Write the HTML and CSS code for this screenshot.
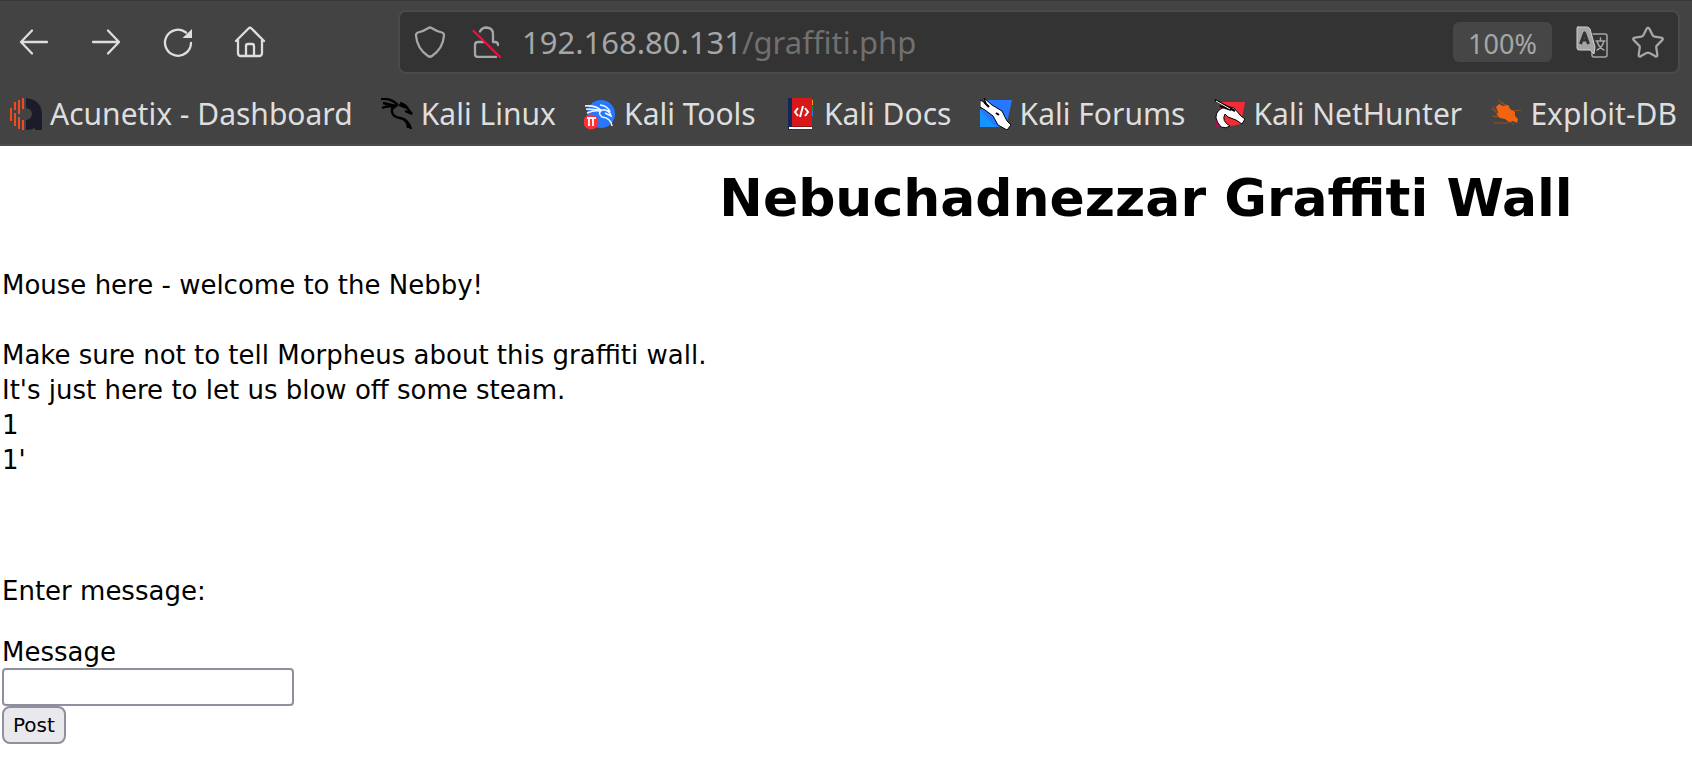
FILE: index.html
```html
<!DOCTYPE html>
<html lang="en">
<head>
<meta charset="utf-8">
<title>Nebuchadnezzar Graffiti Wall</title>
<link rel="stylesheet" href="styles.css">
</head>
<body>
<header class="browser">
  <div class="toolbar">
    <nav class="nav" aria-label="Browser navigation">
      <button class="icon-button" type="button" aria-label="Back"><svg class="icon" viewBox="0 0 32 32"><path d="M29 16H3M14 4.500 3 16l11 11.500"/></svg></button>
      <button class="icon-button" type="button" aria-label="Forward"><svg class="icon" viewBox="0 0 32 32"><path d="M3 16h26M18 4.500 29 16 18 27.500"/></svg></button>
      <button class="icon-button" type="button" aria-label="Reload"><svg class="icon" viewBox="0 0 32 32"><path d="M29 17A13 13 0 1 1 24 6.500"/><path class="solid" d="M30 3v9h-9.500z"/></svg></button>
      <button class="icon-button" type="button" aria-label="Home"><svg class="icon" viewBox="0 0 32 32"><path d="M2 15 14.500 2.500q1.500-1.500 3 0L30 15M4 14v13q0 3 3 3h18q3 0 3-3V14M12 30V20q0-2 2-2h4q2 0 2 2v10"/></svg></button>
    </nav>
    <div class="address">
      <div class="tools">
        <svg class="icon" viewBox="0 0 32 32" role="img" aria-label="Protection"><path d="M14.500 2q1.500-1 3 0Q22 5 28 6.500q2 .5 2 3-1 13-12 20.500-2 1.500-4 0Q3 22.500 2 9.500q0-2.500 2-3Q10 5 14.500 2z"/></svg>
        <svg class="icon" viewBox="0 0 32 32" role="img" aria-label="Not secure"><path d="M10 5.500Q12 1.500 16.500 1.500 23 2 23 8v8h2q3 0 3 3M14 16H8q-3 0-3 3v9q0 3 3 3h18"/><path class="slash" d="M3.500 5 30 31"/></svg>
      </div>
      <span class="url">192.168.80.131<span class="path">/graffiti.php</span></span>
      <div class="tools">
        <button class="zoom" type="button">100%</button>
        <svg class="icon" viewBox="0 0 32 32" role="img" aria-label="Translate"><path class="thin" d="M17 8h12q2 0 2 2v19q0 2-2 2H18q-2 0-2-2v-5M20 15h9M24.500 12v3M21 15q2 7 7 9M28 15q-2 7-7 9"/><path class="page" d="M2 1h9q2 0 3 2l5 18-1 7-4-4H3q-2 0-2-2V2q0-1 1-1z"/><path class="letter" d="m4.500 18 4-11 4 11M6 14h5"/></svg>
        <svg class="icon" viewBox="0 0 32 32" role="img" aria-label="Bookmark"><path d="m14.500 3q1.500-2.500 3 0l3 6q.7 1.500 2 1.700l6.500 1q3 .5 1 2.700l-5 5q-1 1-.7 2.500l1 6.500q.3 3-2.300 1.700L17.500 27q-1.500-.7-3 0L9 30.100q-2.600 1.300-2.300-1.700l1-6.500q.3-1.500-.7-2.500l-5-5q-2-2.200 1-2.700l6.500-1q1.300-.2 2-1.700z"/></svg>
      </div>
    </div>
  </div>
  <nav class="bookmarks" aria-label="Bookmarks">
    <a class="bookmark" href="#"><svg class="fav" viewBox="0 0 32 32"><path fill="#1b1b29" d="M16 0q16 2 16 17v15h-7v-2q-4 2-9 2V22a6 6 0 0 0 0-12z"/><path fill="none" stroke="#f04a20" stroke-width="2" d="M1 10v13M5 4v8M5 15v13M9 2v14M9 19v12M13 0v11M13 22v10"/></svg>Acunetix - Dashboard</a>
    <a class="bookmark" href="#"><svg class="fav" viewBox="0 0 32 32"><path class="ink" d="M0 1q10-1 17 6M2 5l13 3M1 10q6-3 14-1M17 7q-7 2-6 7 1 5 8 6 8 1 11 11M18 7l8 3 5 6-7-3M19 5q6 2 8 6M22 21q5 3 5 9"/></svg>Kali Linux</a>
    <a class="bookmark" href="#"><svg class="fav" viewBox="0 0 32 32"><circle cx="17" cy="16" r="14" fill="#2777ff"/><path d="M1 8q10-1 16 4M2 11l14 1M3 15q7-3 13-2M18 12q-5 3 0 7 9 1 10 9M18 12q7-1 9 6l-6-3M16 7q8 1 10 7" fill="none" stroke="#eef6ff" stroke-width="1.600"/><circle cx="7" cy="24" r="7.500" fill="#ff3037"/><path d="M3 20h9M5 20v8M9 20v8" stroke="#fff" stroke-width="1.800"/></svg>Kali Tools</a>
    <a class="bookmark" href="#"><svg class="fav" viewBox="-4 0 32 32"><path fill="#ff9b20" d="M22 2h3v5h-3z"/><path fill="#168b55" d="M22 8h3v5h-3z"/><path fill="#2777ff" d="M22 13h3v5h-3z"/><path fill="#d81718" d="M4 0h20v29H4z"/><path fill="#10285c" d="M0 0h4v32H0z"/><path fill="#8d1117" d="M4 28h20v4H4z"/><path fill="#fff" d="M1 29h23v2H1z"/><path d="m10 10-3 4 3 4M17 10l3 4-3 4M15 8l-3 11" fill="none" stroke="#fff" stroke-width="2"/></svg>Kali Docs</a>
    <a class="bookmark" href="#"><svg class="fav" viewBox="0 0 32 32"><path fill="#2777ff" d="M8 2h24l-6 27H0V12z"/><path fill="#1593ff" d="M0 12 16 29H0z"/><path d="M0 2 6 5 4 0l8 7 10 6 5 10 4 4-4 5-9-5-5-9-8-6-5-3z" fill="#fff" stroke="#000"/><path d="m4 4 5 5M16 15l3 2" stroke="#000" stroke-width="2"/></svg>Kali Forums</a>
    <a class="bookmark" href="#"><svg class="fav" viewBox="0 0 32 32"><path fill="#f62b38" d="M7 4h24l-4 22-15 3H2l3-14z"/><path fill="#9f1551" d="m2 22 14 7H2z"/><path d="M7 29Q-2 19 5 12q7-5 15-2l7 8 4 3-3 5-6-4-8-3-3-3q-4 7 5 12-4 3-9 1z" fill="#fff" stroke="#000"/><path d="m1 2 20 11M6 8l11 4" stroke="#000" stroke-width="2"/><path d="m2 3 14 8" stroke="#fff"/></svg>Kali NetHunter</a>
    <a class="bookmark" href="#"><svg class="fav" viewBox="0 0 32 32"><path d="M8 2l8 5 4 4M1 11l6 3M2 18l7 1M4 25h13l7-3M22 13l9-1M11 5l9 4M20 23l4 4M3 8l4 9" fill="none" stroke="#98501f"/><path d="m6 9 3-3 4 2 5-1 2 4 5 3v4l3 3-1 4-4-2-4 1-4-3-5-1-3-3 1-3z" fill="#f36410"/></svg>Exploit-DB</a>
  </nav>
</header>
<main class="page-body">
  <h1 class="title">Nebuchadnezzar Graffiti Wall</h1>
  <p class="messages">Mouse here - welcome to the Nebby!<br><br>Make sure not to tell Morpheus about this graffiti wall.<br>It's just here to let us blow off some steam.<br>1<br>1'</p>
  <form class="form">
    <p class="prompt">Enter message:</p>
    <label class="label" for="message">Message</label>
    <input class="field" id="message" type="text">
    <button class="post" type="button">Post</button>
  </form>
</main>
</body>
</html>
```
FILE: styles.css
```css
* { box-sizing: border-box; }
body {
  margin: 0;
  background: #fff;
  color: #000;
  font: 26px/35px "DejaVu Sans", sans-serif;
  overflow-x: hidden;
}
.browser {
  background: #434343;
  border-top: 1px solid #383838;
  border-bottom: 2px solid #4c4c4c;
  color: #dedede;
  font-family: "Noto Sans", sans-serif;
}
.toolbar {
  display: flex;
  align-items: center;
  gap: 132px;
  padding: 9px 12px 0 18px;
}
.nav { display: flex; gap: 40px; }
.icon-button {
  width: 32px;
  height: 32px;
  padding: 0;
  border: 0;
  background: none;
  color: inherit;
}
.icon {
  display: block;
  flex: none;
  width: 32px;
  height: 32px;
  fill: none;
  stroke: currentColor;
  stroke-width: 2.3;
  stroke-linecap: round;
  stroke-linejoin: round;
}
.solid { fill: currentColor; stroke: none; }
.slash { stroke: #e31448; }
.thin { stroke-width: 1.5; }
.page { fill: #a4a4a4; stroke: #d0d0d0; stroke-width: 1; }
.letter { stroke: #333; stroke-width: 3; stroke-linecap: butt; }
.address {
  display: flex;
  align-items: center;
  flex: 1;
  gap: 20px;
  height: 64px;
  padding: 0 14px;
  border: 2px solid #4a4a4a;
  border-radius: 8px;
  background: #333;
  color: #a6a6a6;
}
.tools { display: flex; align-items: center; gap: 24px; }
.url { flex: 1; font-size: 31px; line-height: 44px; }
.path { color: #707070; }
.zoom {
  width: 99px;
  height: 40px;
  padding: 4px 0 0;
  border: 0;
  border-radius: 6px;
  background: #464646;
  color: #a6a6a6;
  font: 27px/36px "Noto Sans", sans-serif;
}
.bookmarks {
  display: flex;
  justify-content: space-between;
  padding: 18px 15px 8px 10px;
}
.bookmark {
  display: flex;
  align-items: center;
  gap: 8px;
  color: inherit;
  font-size: 30px;
  line-height: 44px;
  text-decoration: none;
  white-space: nowrap;
}
.fav { flex: none; width: 32px; height: 32px; }
.ink { fill: none; stroke: #000; stroke-width: 2.4; }
.page-body { padding: 22px 2px 0; }
.title {
  margin: 0 0 40px 600px;
  font-size: 52px;
  line-height: 60px;
  text-align: center;
}
.messages { margin: 0 0 96px; }
.form { display: flex; flex-direction: column; align-items: flex-start; }
.prompt { margin: 0 0 28px; }
.label { line-height: 31px; }
.field {
  width: 292px;
  height: 38px;
  border: 2px solid #8f8f9d;
  border-radius: 4px;
  background: #fff;
  font: 21px "DejaVu Sans", sans-serif;
}
.post {
  height: 38px;
  padding: 0 9px;
  border: 2px solid #8f8f9d;
  border-radius: 8px;
  background: #e9e9ed;
  color: #000;
  font: 20px "DejaVu Sans", sans-serif;
}
```
